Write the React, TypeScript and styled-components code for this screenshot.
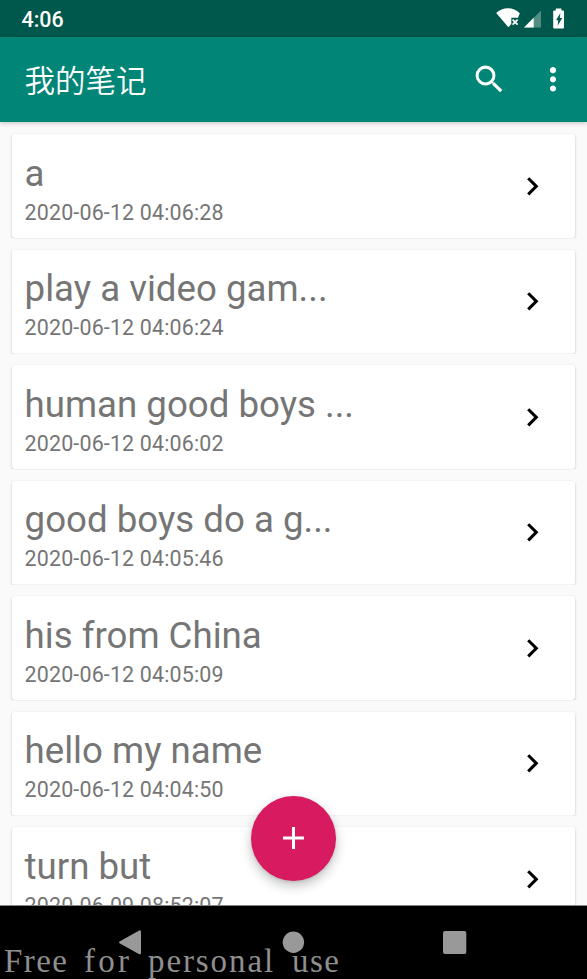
import React from "react";
import styled, { createGlobalStyle } from "styled-components";

const GlobalStyle = createGlobalStyle`
  * { box-sizing: border-box; }
  body { margin: 0; background: #fafafa; font-family: Roboto, "Noto Sans CJK SC", sans-serif; }
`;

const Screen = styled.div`
  position: relative;
  display: flex;
  flex-direction: column;
  width: 587px;
  height: 979px;
  overflow: hidden;
  background: #fafafa;
`;

const StatusBar = styled.header`
  display: flex;
  flex: none;
  align-items: center;
  justify-content: space-between;
  height: 37px;
  padding: 0 17px 0 21.5px;
  background: #00574b;
`;

const Clock = styled.span`
  color: #fff;
  font-size: 21.4px;
  font-weight: 500;
  line-height: 37px;
  padding-top: 2px;
`;

const StatusIcons = styled.svg`
  display: block;
  width: 77px;
  height: 37px;
`;

const AppBar = styled.div`
  position: relative;
  z-index: 1;
  display: flex;
  flex: none;
  align-items: center;
  height: 85.3px;
  padding: 0 18.6px 0 24.5px;
  background: #008577;
  box-shadow: 0 1px 5px rgba(0, 0, 0, 0.24);
`;

const Title = styled.h1`
  flex: 1;
  margin: -2px 0 0;
  color: #fff;
  font-family: "Noto Sans CJK SC", sans-serif;
  font-size: 30.5px;
  font-weight: 350;
  line-height: 44px;
`;

const BarButton = styled.button<{ $gap?: number }>`
  display: block;
  margin: 0 0 0 ${(p) => p.$gap ?? 0}px;
  padding: 0;
  border: 0;
  background: none;
  line-height: 0;
`;

const NoteList = styled.main`
  display: flex;
  flex: 1;
  flex-direction: column;
  gap: 11.5px;
  min-height: 0;
  padding: 12px 12px 0;
  overflow: hidden;
`;

const NoteCard = styled.article`
  display: flex;
  flex: none;
  align-items: center;
  justify-content: space-between;
  height: 104px;
  padding: 0 24.2px 0 12.6px;
  border-radius: 3px;
  background: #fff;
  box-shadow: 0 1px 2.5px rgba(0, 0, 0, 0.25);
  clip-path: inset(-3px -4px 0 -4px);
`;

const NoteText = styled.div`
  align-self: flex-start;
  padding-top: 17.5px;
  color: #757575;
  white-space: nowrap;
`;

const NoteTitle = styled.div`
  font-size: 36.65px;
  line-height: 43px;
`;

const NoteDate = styled.div`
  margin-top: 4.8px;
  font-size: 21.4px;
  line-height: 26px;
  letter-spacing: 0.17px;
`;

const AddButton = styled.button`
  position: absolute;
  z-index: 2;
  left: 250.7px;
  top: 795.7px;
  display: grid;
  place-items: center;
  width: 85.5px;
  height: 85.5px;
  padding: 0;
  border: 0;
  border-radius: 50%;
  background: #d81b60;
  box-shadow: 0 5px 12px rgba(0, 0, 0, 0.24), 0 1px 3px rgba(0, 0, 0, 0.1);
`;

const NavBar = styled.nav`
  flex: none;
  height: 74px;
  border-top: 1px solid #858585;
  background: #000;
`;

const NavIcons = styled.svg`
  display: block;
  width: 587px;
  height: 73px;
`;

const Watermark = styled.div`
  position: absolute;
  left: 4px;
  bottom: -1px;
  display: flex;
  gap: 16px;
  color: #8f8f8f;
  font-family: "Liberation Serif", serif;
  font-size: 33px;
  line-height: 38px;
  white-space: pre;
`;

const MarkWord = styled.span<{ $width: number; $spacing: number }>`
  width: ${(p) => p.$width}px;
  letter-spacing: ${(p) => p.$spacing}px;
`;

const notes = [
  { title: "a", date: "2020-06-12 04:06:28" },
  { title: "play a video gam...", date: "2020-06-12 04:06:24" },
  { title: "human good boys ...", date: "2020-06-12 04:06:02" },
  { title: "good boys do a g...", date: "2020-06-12 04:05:46" },
  { title: "his from China", date: "2020-06-12 04:05:09" },
  { title: "hello my name", date: "2020-06-12 04:04:50" },
  { title: "turn but", date: "2020-06-09 08:52:07" },
];

const markWords = [
  { text: "Free", width: 64, spacing: 1.4 },
  { text: "for", width: 48, spacing: 3.2 },
  { text: "personal", width: 128, spacing: 1.9 },
  { text: "use", width: 48, spacing: 1.4 },
];

export default function App() {
  return (
    <Screen>
      <GlobalStyle />
      <StatusBar>
        <Clock>4:06</Clock>
        <StatusIcons viewBox="493 0 77 37">
          <path
            fill="#fff"
            d="M496.2 13C502.5 7 513 6.6 519.8 13.2L518 17.8H511.3V24L508.4 27.2Z"
          />
          <path d="M512.6 19.6L517.6 24.6M517.6 19.6L512.6 24.6" stroke="#fff" strokeWidth="1.7" />
          <path d="M541 10.5V27.5H524Z" fill="#fff" opacity=".32" />
          <path d="M533.7 17.8V27.5H524Z" fill="#fff" />
          <path
            fill="#fff"
            d="M555.8 8.5h5.6v2h1.6q1 0 1 1v16q0 1-1 1h-8.8q-1 0-1-1v-16q0-1 1-1h1.6z"
          />
          <path d="M560.4 13L556 20.2H558.2L557.7 25.7L562.2 18H559.8Z" fill="#00574b" />
        </StatusIcons>
      </StatusBar>
      <AppBar>
        <Title>我的笔记</Title>
        <BarButton aria-label="搜索">
          <svg width="36.7" height="36.7" viewBox="0 0 24 24" fill="#fff">
            <path d="M15.5 14h-.79l-.28-.27A6.471 6.471 0 0 0 16 9.5 6.5 6.5 0 1 0 9.5 16c1.61 0 3.09-.59 4.23-1.57l.27.28v.79l5 4.99L20.49 19l-4.99-5zm-6 0C7.01 14 5 11.99 5 9.5S7.01 5 9.5 5 14 7.01 14 9.5 11.99 14 9.5 14z" />
          </svg>
        </BarButton>
        <BarButton $gap={30.8} aria-label="更多">
          <svg width="30" height="36.7" viewBox="2.2 0 19.6 24" fill="#fff">
            <path d="M12 8c1.1 0 2-.9 2-2s-.9-2-2-2-2 .9-2 2 .9 2 2 2zm0 2c-1.1 0-2 .9-2 2s.9 2 2 2 2-.9 2-2-.9-2-2-2zm0 6c-1.1 0-2 .9-2 2s.9 2 2 2 2-.9 2-2-.9-2-2-2z" />
          </svg>
        </BarButton>
      </AppBar>
      <NoteList>
        {notes.map((note) => (
          <NoteCard key={note.date}>
            <NoteText>
              <NoteTitle>{note.title}</NoteTitle>
              <NoteDate>{note.date}</NoteDate>
            </NoteText>
            <svg width="36.7" height="36.7" viewBox="0 0 24 24">
              <path d="M10 6L8.59 7.41 13.17 12l-4.58 4.59L10 18l6-6z" />
            </svg>
          </NoteCard>
        ))}
      </NoteList>
      <NavBar>
        <NavIcons viewBox="0 906 587 73" fill="#999">
          <path d="M120 941.2L138.8 930.7Q141 929.6 141 932V953Q141 955.2 138.8 954.1L120 943.6Q118 942.4 120 941.2Z" />
          <circle cx="293.4" cy="942.3" r="10.7" />
          <rect x="443" y="931" width="23.3" height="23" rx="2" />
        </NavIcons>
      </NavBar>
      <AddButton aria-label="新建">
        <svg width="21" height="22" viewBox="0 0 21 22" fill="#fff">
          <path d="M9 0h3v9.5h9v3h-9V22H9v-9.5H0v-3h9z" />
        </svg>
      </AddButton>
      <Watermark>
        {markWords.map((word) => (
          <MarkWord key={word.text} $width={word.width} $spacing={word.spacing}>
            {word.text}
          </MarkWord>
        ))}
      </Watermark>
    </Screen>
  );
}
